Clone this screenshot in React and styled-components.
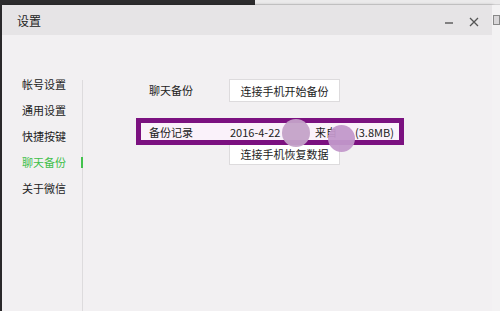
import React from 'react';
import styled, { createGlobalStyle } from 'styled-components';

const FONT = '"Microsoft YaHei", "Noto Sans CJK SC", "Liberation Sans", sans-serif';

const GlobalStyle = createGlobalStyle`
  html, body { margin: 0; padding: 0; }
  body {
    width: 500px;
    height: 311px;
    overflow: hidden;
    background: #2b2a2c;
    font-family: ${FONT};
  }
`;

const Screen = styled.div`
  position: relative;
  width: 500px;
  height: 311px;
  display: flex;
  flex-direction: column;
  overflow: hidden;
`;

const TopStrip = styled.div`
  height: 5px;
  display: flex;
`;

const DarkPart = styled.div`
  width: 255px;
  background: #2d2c2e;
`;

const LightPart = styled.div`
  flex: 1;
  background: #ebeaeb;
  border-bottom: 1px solid #d4d3d4;
`;

const Desk = styled.div`
  flex: 1;
  display: flex;
  padding-left: 2px;
`;

const Win = styled.div`
  width: 490px;
  display: flex;
  flex-direction: column;
  background: #f2f0f2;
  box-shadow: 1px 0 3px rgba(0, 0, 0, 0.25);
`;

const RightEdge = styled.div`
  flex: 1;
  background: #f3f2f3;
  display: flex;
  flex-direction: column;
  align-items: flex-end;
  padding-top: 10px;
`;

const TinyIcon = styled.div`
  width: 5px;
  height: 8px;
  border: 1px solid #888;
  background: #d8d6d8;
`;

const TitleBar = styled.div`
  height: 30px;
  background: #e6e4e6;
  display: flex;
  align-items: center;
  padding: 0 12px 0 15px;
`;

const Title = styled.span`
  font-size: 12px;
  color: #222;
  flex: 1;
`;

const Ctrl = styled.svg`
  margin-left: 13px;
  margin-top: 4px;
`;

const Body = styled.div`
  flex: 1;
  display: flex;
`;

const Nav = styled.div`
  width: 80px;
  padding-top: 36px;
  display: flex;
  flex-direction: column;
`;

const NavItem = styled.div`
  position: relative;
  height: 26px;
  line-height: 26px;
  padding-left: 20px;
  font-size: 11px;
  color: ${p => (p.$active ? '#3fbf4a' : '#222')};
  &::after {
    content: '';
    display: ${p => (p.$active ? 'block' : 'none')};
    position: absolute;
    right: -1px;
    top: 8px;
    width: 2px;
    height: 11px;
    background: #43c24e;
  }
`;

const NavBorder = styled.div`
  width: 1px;
  background: #dddbdd;
  margin-top: 45px;
`;

const Content = styled.div`
  position: relative;
  flex: 1;
  padding: 44px 0 0 66px;
  display: flex;
  flex-direction: column;
  gap: 20px;
`;

const Row = styled.div`
  display: flex;
  align-items: flex-start;
`;

const Label = styled.div`
  width: 80px;
  font-size: 11px;
  color: #222;
  line-height: 23px;
`;

const Col = styled.div`
  display: flex;
  flex-direction: column;
`;

const Spacer = styled.div`
  height: 20px;
`;

const Btn = styled.div`
  width: 109px;
  height: 21px;
  background: #ffffff;
  border: 1px solid #dddbdd;
  font-size: 11px;
  color: #222;
  display: flex;
  align-items: center;
  justify-content: center;
`;

const Highlight = styled.div`
  position: absolute;
  left: 53px;
  top: 83px;
  width: 258px;
  height: 17px;
  border: 5px solid #7b1180;
  pointer-events: none;
`;

const InnerBg = styled.div`
  position: absolute;
  left: 58px;
  top: 88px;
  width: 258px;
  height: 17px;
  background: #faf2fa;
`;

const OverText = styled.div`
  position: absolute;
  left: 66px;
  top: 89px;
  font-size: 11px;
  color: #222;
  display: flex;
  white-space: nowrap;
`;

const OverCell = styled.span`
  width: ${p => p.$w}px;
`;

const Blob = styled.div`
  position: absolute;
  left: ${p => p.$x}px;
  top: ${p => p.$y}px;
  width: ${p => p.$d}px;
  height: ${p => p.$d}px;
  border-radius: 50%;
  background: ${p => p.$c};
`;

export default function App() {
  const nav = ['帐号设置', '通用设置', '快捷按键', '聊天备份', '关于微信'];
  return (
    <>
      <GlobalStyle />
      <Screen>
        <TopStrip>
          <DarkPart />
          <LightPart />
        </TopStrip>
        <Desk>
          <Win>
            <TitleBar>
              <Title>设置</Title>
              <Ctrl width="12" height="12" viewBox="0 0 12 12">
                <path d="M2 7h8" stroke="#555" strokeWidth="1.4" />
              </Ctrl>
              <Ctrl width="12" height="12" viewBox="0 0 12 12">
                <path d="M2 2l8 8M10 2l-8 8" stroke="#555" strokeWidth="1.3" />
              </Ctrl>
            </TitleBar>
            <Body>
              <Nav>
                {nav.map(n => (
                  <NavItem key={n} $active={n === '聊天备份'}>{n}</NavItem>
                ))}
              </Nav>
              <NavBorder />
              <Content>
                <Row>
                  <Label>聊天备份</Label>
                  <Btn>连接手机开始备份</Btn>
                </Row>
                <Row>
                  <Label />
                  <Col>
                    <Spacer />
                    <Btn>连接手机恢复数据</Btn>
                  </Col>
                </Row>
                <InnerBg />
                <OverText>
                  <OverCell $w={81}>备份记录</OverCell>
                  <OverCell $w={85}>2016-4-22</OverCell>
                  <OverCell $w={40}>来自</OverCell>
                  <OverCell $w={60}>(3.8MB)</OverCell>
                </OverText>
                <Highlight />
                <Blob $x={199} $y={84} $d={28} $c="rgba(196, 162, 200, 0.95)" />
                <Blob $x={245} $y={90} $d={27} $c="rgba(194, 152, 202, 0.95)" />
              </Content>
            </Body>
          </Win>
          <RightEdge>
            <TinyIcon />
          </RightEdge>
        </Desk>
      </Screen>
    </>
  );
}
